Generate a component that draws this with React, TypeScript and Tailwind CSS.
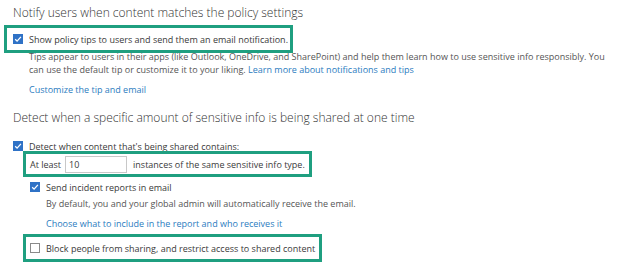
import React from 'react';

const font = { fontFamily: '"Open Sans", "Noto Sans", sans-serif' };

const Check = ({ checked }: { checked: boolean }) =>
  checked ? (
    <span className="flex h-[10px] w-[10px] shrink-0 items-center justify-center bg-[#2f72c6]">
      <svg viewBox="0 0 10 10" className="h-[10px] w-[10px]">
        <path d="M2.2 5.2 L4.1 7.1 L7.9 2.9" fill="none" stroke="#fff" strokeWidth="1.3" />
      </svg>
    </span>
  ) : (
    <span className="h-[10px] w-[10px] shrink-0 border border-[#8a8a8a] bg-white" />
  );

// green annotation frame drawn over the highlighted row
const Frame = ({ className }: { className: string }) => (
  <span className={`pointer-events-none absolute border-[3px] border-[#1f9f80] ${className}`} />
);

export default function App() {
  return (
    <div className="h-[277px] w-[624px] overflow-hidden bg-white pl-[13px] pt-[5px] text-[9px] text-[#3a3a3a]" style={font}>
      <h2 className="text-[12px] font-light leading-[16px] text-[#333]">
        Notify users when content matches the policy settings
      </h2>

      <div className="relative mt-[11px] flex h-[14px] w-fit items-center gap-[6px] leading-[13px]">
        <Check checked />
        <span>Show policy tips to users and send them an email notification.</span>
        <Frame className="-top-[7px] -bottom-[7px] -left-[9px] -right-[5px]" />
      </div>

      <p className="mt-[4px] w-[602px] pl-[16px] leading-[13px] text-[#555]">
        Tips appear to users in their apps (like Outlook, OneDrive, and SharePoint) and help them learn how to use
        sensitive info responsibly. You can use the default tip or customize it to your liking.{' '}
        <span className="text-[#2b7cc0]">Learn more about notifications and tips</span>
      </p>

      <div className="mt-[7px] pl-[16px] leading-[13px] text-[#2b7cc0]">Customize the tip and email</div>

      <h2 className="mt-[14px] text-[12px] font-light leading-[16px] text-[#333]">
        Detect when a specific amount of sensitive info is being shared at one time
      </h2>

      <div className="mt-[13px] flex h-[14px] items-center gap-[6px] leading-[13px]">
        <Check checked />
        <span>Detect when content that's being shared contains:</span>
      </div>

      <div className="relative ml-[17px] mt-[2px] flex h-[18px] w-fit items-center leading-[13px]">
        <span>At least</span>
        <span className="ml-[4px] flex h-[17px] w-[62px] items-center border border-[#c8c8c8] pl-[3px]">10</span>
        <span className="ml-[6px]">instances of the same sensitive info type.</span>
        <Frame className="-top-[4px] -bottom-[4px] -left-[7px] -right-[7px]" />
      </div>

      <div className="ml-[17px] mt-[7px] flex h-[14px] items-center gap-[6px] leading-[13px]">
        <Check checked />
        <span>Send incident reports in email</span>
      </div>

      <div className="mt-[3px] pl-[33px] leading-[13px] text-[#555]">
        By default, you and your global admin will automatically receive the email.
      </div>

      <div className="mt-[7px] pl-[33px] leading-[13px] text-[#2b7cc0]">
        Choose what to include in the report and who receives it
      </div>

      <div className="relative ml-[17px] mt-[11px] flex h-[14px] w-fit items-center gap-[6px] leading-[13px]">
        <Check checked={false} />
        <span>Block people from sharing, and restrict access to shared content</span>
        <Frame className="-top-[7px] -bottom-[7px] -left-[7px] -right-[7px]" />
      </div>
    </div>
  );
}
